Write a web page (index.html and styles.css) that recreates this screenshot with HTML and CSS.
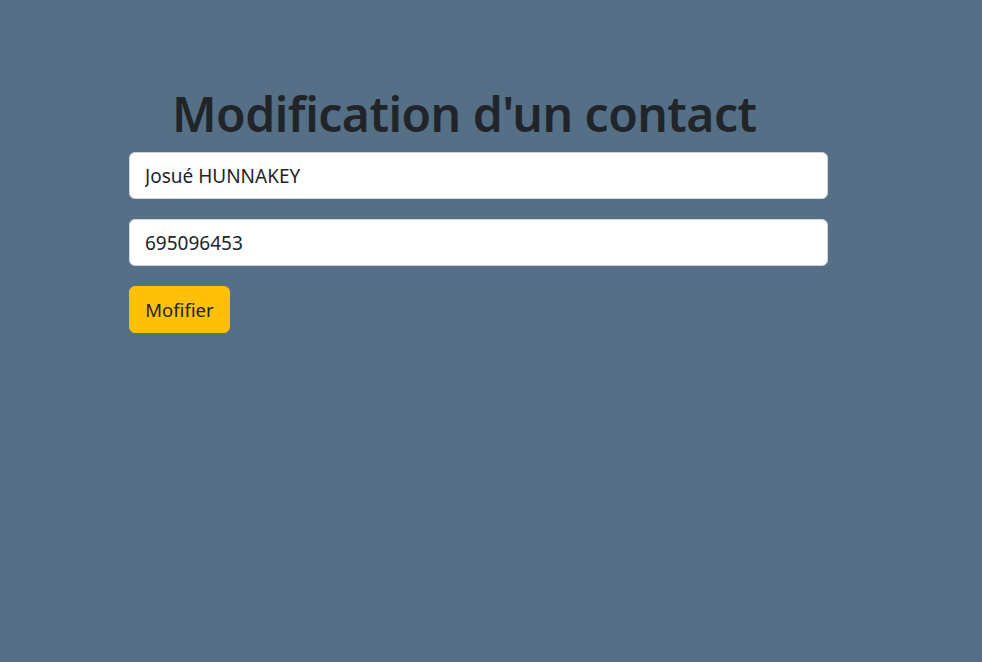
FILE: index.html
```html
<!DOCTYPE html>
<html lang="fr">
<head>
<meta charset="utf-8">
<title>Modification d'un contact</title>
<link rel="stylesheet" href="styles.css">
</head>
<body>
<main class="page">
  <h1 class="title">Modification d'un contact</h1>
  <form class="form">
    <input class="field" type="text" value="Josué HUNNAKEY">
    <input class="field" type="text" value="695096453">
    <button class="btn" type="button">Mofifier</button>
  </form>
</main>
</body>
</html>
```
FILE: styles.css
```css
html, body {
  margin: 0;
  padding: 0;
  background: #546f86;
  height: 100%;
}
body {
  font-family: "Noto Sans", "Open Sans", sans-serif;
  color: #212529;
}
.page {
  width: 699px;
  margin-left: 129px;
  padding-top: 78px;
}
.title {
  margin: 0 0 2px 43px;
  font-size: 48px;
  font-weight: 600;
  letter-spacing: -0.5px;
  line-height: 72px;
  color: #212529;
}
.form {
  display: flex;
  flex-direction: column;
  align-items: flex-start;
  gap: 20px;
}
.field {
  box-sizing: border-box;
  width: 100%;
  height: 47px;
  padding: 0 15px;
  font-family: inherit;
  font-size: 19px;
  color: #212529;
  background: #fff;
  border: 1px solid #ced4da;
  border-radius: 6px;
  outline: none;
}
.btn {
  box-sizing: border-box;
  width: 101px;
  height: 47px;
  padding: 0;
  font-family: inherit;
  font-size: 18.5px;
  color: #212529;
  background: #ffc107;
  border: 1px solid #ffc107;
  border-radius: 6px;
}
```
